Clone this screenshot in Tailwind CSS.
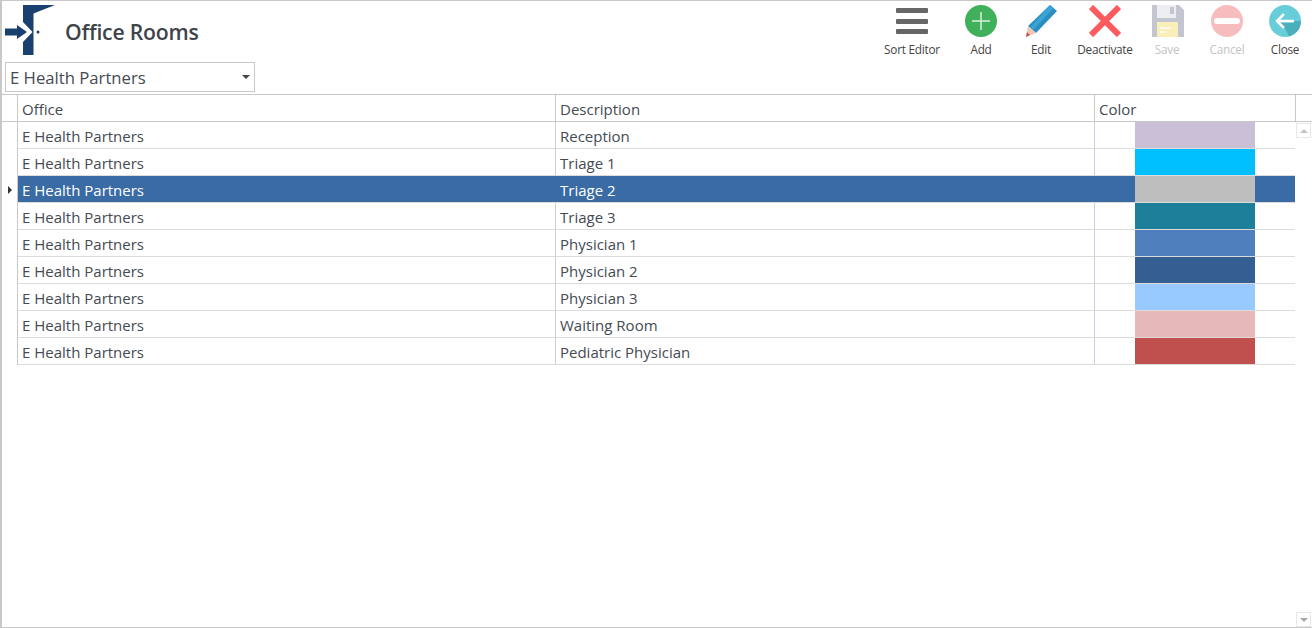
<!DOCTYPE html>
<html lang="en">
<head>
  <meta charset="UTF-8">
  <title>Office Rooms</title>
  <script src="https://cdn.jsdelivr.net/npm/@tailwindcss/browser@4"></script>
</head>
<body class="bg-white overflow-hidden font-['Open_Sans',sans-serif] text-[#444b52]">
  <div class="w-[1312px] h-[628px] border-t border-b border-l-2 border-[#c8c8c8] flex flex-col">
    <!-- top bar -->
    <header class="h-[61px] flex justify-between shrink-0">
      <div class="flex items-start">
        <svg class="ml-[3px] mt-[4px]" width="50" height="51" viewBox="0 0 50 51">
          <path d="M18 0H50L28.5 8.5V50H18Z" fill="#1a406f"/>
          <path d="M18 17L27.5 27L18 37Z" fill="#fff"/>
          <path d="M0 23.5H12V20L22 27L12 34V30.5H0Z" fill="#1a406f"/>
          <circle cx="33" cy="27" r="1.5" fill="#1a406f"/>
        </svg>
        <h1 class="ml-[10px] mt-[14px] text-[21.2px] leading-[34px] font-semibold tracking-[-0.2px] text-[#3e4449]">Office Rooms</h1>
      </div>
      <div class="flex text-[11.8px] leading-[14px] text-[#444] mr-[8px] tracking-[-0.25px]">
        <div class="w-[64px] flex flex-col items-center">
          <svg class="mt-[4px]" width="32" height="32" viewBox="0 0 32 32"><rect y="3" width="32" height="5" rx="1" fill="#666"/><rect y="14" width="32" height="5" rx="1" fill="#666"/><rect y="24" width="32" height="5" rx="1" fill="#666"/></svg>
          <span class="mt-[5px]">Sort Editor</span>
        </div>
        <div class="w-[74px] flex flex-col items-center">
          <svg class="mt-[4px]" width="32" height="32" viewBox="0 0 32 32"><circle cx="16" cy="16" r="16" fill="#41b05a"/><path d="M16 7V25M7 16H25" stroke="#d6f0dc" stroke-width="1.5"/></svg>
          <span class="mt-[5px]">Add</span>
        </div>
        <div class="w-[46px] flex flex-col items-center">
          <svg class="mt-[4px]" width="32" height="32" viewBox="0 0 32 32"><path d="M25 0L32 6L11 28L3 21Z" fill="#2a8fc0"/><path d="M25 0L28.5 3L8 25L5 23Z" fill="#3aa5d3"/><path d="M3 21L11 28L1 32Z" fill="#f1c6b4"/><path d="M2 27L5 30L1 32Z" fill="#c0504d"/></svg>
          <span class="mt-[5px]">Edit</span>
        </div>
        <div class="w-[82px] flex flex-col items-center">
          <svg class="mt-[4px]" width="32" height="32" viewBox="0 0 32 32"><path d="M2 2L30 30M30 2L2 30" stroke="#fb5a5e" stroke-width="6"/></svg>
          <span class="mt-[5px]">Deactivate</span>
        </div>
        <div class="w-[42px] flex flex-col items-center text-[#c4c4c4]">
          <svg class="mt-[4px] ml-[1px]" width="32" height="32" viewBox="0 0 32 32"><path d="M0 0H27L32 5V32H0Z" fill="#c3c6d0"/><rect x="5" y="0" width="19" height="13" fill="#eceef1"/><rect x="18" y="2" width="4" height="7" fill="#c3c6d0"/><rect x="5" y="17" width="21" height="15" fill="#faeeb9"/><path d="M8 23H19M8 27H13" stroke="#fff" stroke-width="1.5"/></svg>
          <span class="mt-[5px]">Save</span>
        </div>
        <div class="w-[78px] flex flex-col items-center text-[#c4c4c4]">
          <svg class="mt-[4px]" width="32" height="32" viewBox="0 0 32 32"><circle cx="16" cy="16" r="16" fill="#f7bcbe"/><rect x="3" y="13" width="26" height="6" rx="3" fill="#fff"/></svg>
          <span class="mt-[5px]">Cancel</span>
        </div>
        <div class="w-[38px] flex flex-col items-center">
          <svg class="mt-[4px]" width="32" height="32" viewBox="0 0 32 32"><circle cx="16" cy="16" r="16" fill="#67cdd9"/><path d="M8 16L17 25L20 31.5A16 16 0 0 0 32 16L26 16L24 18H12Z" fill="#4baebb"/><path d="M25 16H8M15 9L8 16L15 23" fill="none" stroke="#fff" stroke-width="2.5"/></svg>
          <span class="mt-[5px]">Close</span>
        </div>
      </div>
    </header>

    <!-- office picker -->
    <div class="ml-[3px] w-[250px] h-[30px] border border-[#c8c8c8] flex items-center justify-between pl-[4px] pr-[4px] text-[16.7px] shrink-0">
      <span class="pt-[2px]">E Health Partners</span>
      <span class="w-0 h-0 border-x-[4px] border-x-transparent border-t-[4px] border-t-[#444]"></span>
    </div>

    <!-- grid header -->
    <div class="mt-[2px] flex h-[28px] border-y border-[#c8c8c8] text-[15px] shrink-0">
      <div class="w-[16px] border-r border-[#c8c8c8]"></div>
      <div class="w-[538px] border-r border-[#c8c8c8] pl-[4px] leading-[28px]">Office</div>
      <div class="w-[539px] border-r border-[#c8c8c8] pl-[4px] leading-[28px]">Description</div>
      <div class="w-[201px] border-r border-[#c8c8c8] pl-[4px] leading-[28px]">Color</div>
    </div>

    <!-- grid body -->
    <div class="flex flex-1 min-h-0">
      <div class="w-[1294px] text-[15px]">
        <div class="flex h-[27px] leading-[29px]">
          <div class="w-[16px] border-r border-[#c8c8c8]"></div>
          <div class="flex flex-1 border-b border-[#dcdcdc]">
            <div class="w-[538px] border-r border-[#d0d0d0] pl-[4px]">E Health Partners</div>
            <div class="w-[539px] border-r border-[#c5d3e0] pl-[4px]">Reception</div>
            <div class="ml-[40px] w-[120px] bg-[#cbbfd8]"></div>
          </div>
        </div>
        <div class="flex h-[27px] leading-[29px]">
          <div class="w-[16px] border-r border-[#c8c8c8]"></div>
          <div class="flex flex-1 border-b border-[#dcdcdc]">
            <div class="w-[538px] border-r border-[#d0d0d0] pl-[4px]">E Health Partners</div>
            <div class="w-[539px] border-r border-[#c5d3e0] pl-[4px]">Triage 1</div>
            <div class="ml-[40px] w-[120px] bg-[#00bfff]"></div>
          </div>
        </div>
        <div class="flex h-[27px] leading-[29px]">
          <div class="w-[16px] border-r border-[#c8c8c8] flex items-center justify-center pr-[1px] pl-[1px]">
            <span class="ml-[1px] w-0 h-0 border-y-[4px] border-y-transparent border-l-[4px] border-l-[#333]"></span>
          </div>
          <div class="flex flex-1 border-b border-[#dcdcdc] bg-[#3a6ba5] text-white">
            <div class="w-[538px] border-r border-[#3a6ba5] pl-[4px]">E Health Partners</div>
            <div class="w-[539px] border-r border-[#3a6ba5] pl-[4px]">Triage 2</div>
            <div class="ml-[40px] w-[120px] bg-[#bebebe]"></div>
          </div>
        </div>
        <div class="flex h-[27px] leading-[29px]">
          <div class="w-[16px] border-r border-[#c8c8c8]"></div>
          <div class="flex flex-1 border-b border-[#dcdcdc]">
            <div class="w-[538px] border-r border-[#d0d0d0] pl-[4px]">E Health Partners</div>
            <div class="w-[539px] border-r border-[#c5d3e0] pl-[4px]">Triage 3</div>
            <div class="ml-[40px] w-[120px] bg-[#1e7f9a]"></div>
          </div>
        </div>
        <div class="flex h-[27px] leading-[29px]">
          <div class="w-[16px] border-r border-[#c8c8c8]"></div>
          <div class="flex flex-1 border-b border-[#dcdcdc]">
            <div class="w-[538px] border-r border-[#d0d0d0] pl-[4px]">E Health Partners</div>
            <div class="w-[539px] border-r border-[#c5d3e0] pl-[4px]">Physician 1</div>
            <div class="ml-[40px] w-[120px] bg-[#4f7fbc]"></div>
          </div>
        </div>
        <div class="flex h-[27px] leading-[29px]">
          <div class="w-[16px] border-r border-[#c8c8c8]"></div>
          <div class="flex flex-1 border-b border-[#dcdcdc]">
            <div class="w-[538px] border-r border-[#d0d0d0] pl-[4px]">E Health Partners</div>
            <div class="w-[539px] border-r border-[#c5d3e0] pl-[4px]">Physician 2</div>
            <div class="ml-[40px] w-[120px] bg-[#355f92]"></div>
          </div>
        </div>
        <div class="flex h-[27px] leading-[29px]">
          <div class="w-[16px] border-r border-[#c8c8c8]"></div>
          <div class="flex flex-1 border-b border-[#dcdcdc]">
            <div class="w-[538px] border-r border-[#d0d0d0] pl-[4px]">E Health Partners</div>
            <div class="w-[539px] border-r border-[#c5d3e0] pl-[4px]">Physician 3</div>
            <div class="ml-[40px] w-[120px] bg-[#99caff]"></div>
          </div>
        </div>
        <div class="flex h-[27px] leading-[29px]">
          <div class="w-[16px] border-r border-[#c8c8c8]"></div>
          <div class="flex flex-1 border-b border-[#dcdcdc]">
            <div class="w-[538px] border-r border-[#d0d0d0] pl-[4px]">E Health Partners</div>
            <div class="w-[539px] border-r border-[#c5d3e0] pl-[4px]">Waiting Room</div>
            <div class="ml-[40px] w-[120px] bg-[#e6b8b7]"></div>
          </div>
        </div>
        <div class="flex h-[27px] leading-[29px]">
          <div class="w-[16px] border-r border-[#c8c8c8]"></div>
          <div class="flex flex-1 border-b border-[#dcdcdc]">
            <div class="w-[538px] border-r border-[#d0d0d0] pl-[4px]">E Health Partners</div>
            <div class="w-[539px] border-r border-[#c5d3e0] pl-[4px]">Pediatric Physician</div>
            <div class="ml-[40px] w-[120px] bg-[#c0504d]"></div>
          </div>
        </div>
      </div>
      <!-- scrollbar -->
      <div class="w-[16px] flex flex-col justify-between pt-[1px] pb-0 ml-[1px]">
        <div class="w-[15px] h-[15px] border border-[#e8e8e8] flex items-center justify-center">
          <span class="w-0 h-0 border-x-[4px] border-x-transparent border-b-[4px] border-b-[#c4c4c4]"></span>
        </div>
        <div class="w-[15px] h-[15px] border border-[#e8e8e8] flex items-center justify-center">
          <span class="w-0 h-0 border-x-[4px] border-x-transparent border-t-[4px] border-t-[#a8a8a8]"></span>
        </div>
      </div>
    </div>
  </div>
</body>
</html>
